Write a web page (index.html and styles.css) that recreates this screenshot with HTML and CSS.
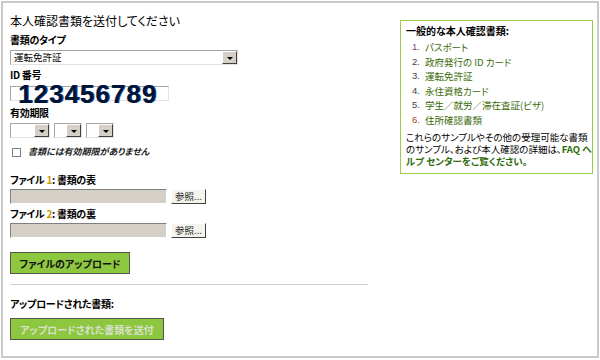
FILE: index.html
```html
<!DOCTYPE html>
<html lang="ja">
<head>
    <meta charset="UTF-8">
    <title>本人確認書類を送付</title>
    <link rel="stylesheet" href="styles.css">
</head>
<body>
    <div class="frame">
        <!-- Left: upload form -->
        <div class="form-col">
            <h1 class="form-title">本人確認書類を送付してください</h1>

            <div class="label">書類のタイプ</div>
            <div class="fake-select doc-type">
                <span class="sel-text">運転免許証</span>
                <span class="sel-arrow"></span>
            </div>

            <div class="label">ID 番号</div>
            <div class="id-input">
                <span class="id-value">123456789</span>
            </div>

            <div class="label gap-xl">有効期限</div>
            <div class="date-row">
                <div class="fake-select date-y"><span class="sel-text"></span><span class="sel-arrow"></span></div>
                <div class="fake-select date-m"><span class="sel-text"></span><span class="sel-arrow"></span></div>
                <div class="fake-select date-d"><span class="sel-text"></span><span class="sel-arrow"></span></div>
            </div>

            <label class="no-expiry">
                <span class="check"></span>
                <span class="no-expiry-text">書類には有効期限がありません</span>
            </label>

            <div class="label file-label">ファイル <span class="num">1</span>: 書類の表</div>
            <div class="file-row">
                <span class="file-box"></span>
                <span class="browse-btn">参照...</span>
            </div>

            <div class="label">ファイル <span class="num">2</span>: 書類の裏</div>
            <div class="file-row">
                <span class="file-box"></span>
                <span class="browse-btn">参照...</span>
            </div>

            <button class="green-btn upload-btn">ファイルのアップロード</button>

            <hr class="divider">

            <div class="label uploaded-label">アップロードされた書類:</div>
            <button class="green-btn send-btn" disabled>アップロードされた書類を送付</button>
        </div>

        <!-- Right: help box -->
        <div class="help-box">
            <div class="help-title">一般的な本人確認書類:</div>
            <ol class="doc-list">
                <li>パスポート</li>
                <li>政府発行の ID カード</li>
                <li>運転免許証</li>
                <li>永住資格カード</li>
                <li>学生／就労／滞在査証(ビザ)</li>
                <li>住所確認書類</li>
            </ol>
            <p class="help-text">これらのサンプルやその他の受理可能な書類<br>のサンプル、および本人確認の詳細は、<a href="#" class="faq-link">FAQ へ<br>ルプ センターをご覧ください。</a></p>
        </div>
    </div>
</body>
</html>
```

FILE: styles.css
```css
* {
    margin: 0;
    padding: 0;
    box-sizing: border-box;
}

body {
    font-family: "Noto Sans CJK JP", "Liberation Sans", sans-serif;
    font-size: 10px;
    font-feature-settings: "palt";
    color: #000;
    background: #fff;
}

/* Outer grey frame */
.frame {
    margin: 1px;
    width: 598px;
    height: 357px;
    border: 2px solid #c9c9c9;
    display: flex;
    padding: 9px 0 0 7px;
}

.form-col {
    width: 358px;
    display: flex;
    flex-direction: column;
    align-items: flex-start;
}

.form-title {
    font-size: 12px;
    font-weight: normal;
    line-height: 18px;
}

.label {
    font-weight: bold;
    line-height: 12px;
    margin-top: 4px;
    letter-spacing: -0.3px;
}

.gap-xl { margin-top: 6px; }

/* Old style drop downs */
.fake-select {
    display: flex;
    height: 15px;
    border: 1px solid #a5a5a5;
    border-right-color: #e3e3e3;
    border-bottom-color: #e3e3e3;
    background: #fff;
    margin-top: 4px;
}

.sel-text {
    flex: 1;
    font-size: 9.5px;
    line-height: 13px;
    padding-left: 3px;
}

.sel-arrow {
    width: 15px;
    background: #d4d0c8;
    border: 1px solid #fff;
    border-right-color: #404040;
    border-bottom-color: #404040;
    display: flex;
    align-items: center;
    justify-content: center;
}

.sel-arrow::after {
    content: "";
    border-left: 3px solid transparent;
    border-right: 3px solid transparent;
    border-top: 3px solid #000;
    margin-top: 1px;
}

.doc-type { width: 228px; }

/* ID number field */
.id-input {
    width: 159px;
    height: 15px;
    margin-top: 5px;
    border: 1px solid #a5a5a5;
    border-right-color: #e3e3e3;
    border-bottom-color: #e3e3e3;
    position: relative;
}

.id-value {
    position: absolute;
    left: 7px;
    top: -4px;
    font-family: "Liberation Sans", Arial, sans-serif;
    font-weight: bold;
    font-size: 26px;
    line-height: 22px;
    color: #001436;
    letter-spacing: 1px;
    text-shadow: 1px 0 0 #1f4fa0;
}

.date-row {
    display: flex;
    gap: 4px;
}

.date-y { width: 40px; }
.date-m { width: 28px; }
.date-d { width: 28px; }

.no-expiry {
    display: flex;
    align-items: center;
    margin-top: 8px;
    line-height: 12px;
}

.check {
    width: 9px;
    height: 9px;
    border: 1px solid #808080;
    margin: 0 7px 0 2px;
}

.no-expiry-text {
    font-style: italic;
    font-weight: bold;
    font-size: 9px;
    color: #222;
}

.file-label { margin-top: 16px; }

.num { color: #c79a00; }

.file-row {
    display: flex;
    gap: 4px;
    margin-top: 3px;
}

.file-box {
    width: 157px;
    height: 15px;
    background: #d4d0c8;
    border: 1px solid #808080;
    border-right-color: #fff;
    border-bottom-color: #fff;
}

.browse-btn {
    width: 35px;
    height: 15px;
    background: #f4f3ee;
    border: 1px solid #fff;
    border-right-color: #404040;
    border-bottom-color: #404040;
    font-size: 9.5px;
    line-height: 13px;
    text-align: center;
    color: #222;
}

/* Green action buttons */
.green-btn {
    font-family: inherit;
    font-feature-settings: "palt";
    font-size: 10px;
    font-weight: bold;
    height: 22px;
    background: #8dc63f;
    border: 1px solid #555;
    color: #111;
    white-space: nowrap;
}

.upload-btn {
    width: 120px;
    margin-top: 14px;
}

.send-btn {
    width: 154px;
    margin-top: 8px;
    color: #d9e0cc;
}

.divider {
    width: 358px;
    border: none;
    border-top: 1px solid #cfcfcf;
    margin-top: 10px;
}

.uploaded-label { margin-top: 13px; }

/* Help box on the right */
.help-box {
    width: 193px;
    height: 154px;
    margin: 8px 0 0 32px;
    border: 1px solid #9acd4a;
    padding: 3px 4px 0 5px;
    font-size: 9.5px;
}

.help-title {
    font-weight: bold;
    font-size: 10px;
    line-height: 14px;
}

.doc-list {
    list-style: none;
    counter-reset: doc;
    margin-top: 2px;
}

.doc-list li {
    counter-increment: doc;
    color: #3b6b0a;
    line-height: 14.5px;
    padding-left: 19px;
    position: relative;
}

.doc-list li::before {
    content: counter(doc) ".";
    position: absolute;
    left: 6px;
    color: #444;
    font-family: "Liberation Sans", sans-serif;
}

.doc-list li:first-child::before { color: #8a3a8a; }
.doc-list li:last-child::before { color: #a0402a; }

.help-text {
    margin-top: 4px;
    line-height: 12px;
    white-space: nowrap;
}

.faq-link {
    color: #2f6b0a;
    font-weight: bold;
    text-decoration: none;
}
```
